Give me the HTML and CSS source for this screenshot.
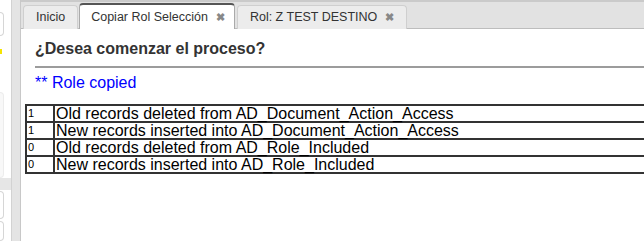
FILE: index.html
```html
<!doctype html>
<html lang="es">

<head>
    <meta charset="UTF-8" />
    <title>Copiar Rol Selección</title>
    <link rel="stylesheet" href="styles.css">
</head>

<body>
    <div class="app">
        <div class="side">
            <div class="side-box box-top"></div>
            <div class="side-mark"></div>
            <div class="side-box box-mid"></div>
            <div class="side-gap"></div>
            <div class="side-box box-low"></div>
            <div class="side-box box-last"></div>
        </div>
        <div class="splitter"></div>
        <div class="main">
            <div class="tabs">
                <div class="tab">Inicio</div>
                <div class="tab active">Copiar Rol Selección<span class="close">&#10006;</span></div>
                <div class="tab">Rol: Z TEST DESTINO<span class="close">&#10006;</span></div>
            </div>
            <div class="content">
                <h2 class="question">¿Desea comenzar el proceso?</h2>
                <p class="message">** Role copied</p>
                <table class="result">
                    <tr><td class="count">1</td><td>Old records deleted from AD_Document_Action_Access</td></tr>
                    <tr><td class="count">1</td><td>New records inserted into AD_Document_Action_Access</td></tr>
                    <tr><td class="count">0</td><td>Old records deleted from AD_Role_Included</td></tr>
                    <tr><td class="count">0</td><td>New records inserted into AD_Role_Included</td></tr>
                </table>
            </div>
        </div>
    </div>
</body>

</html>
```

FILE: styles.css
```css
body {
    margin: 0;
    padding: 0;
    font-family: "Liberation Sans", Arial, sans-serif;
    background-color: #fff;
    overflow: hidden;
}

.app {
    display: flex;
    height: 241px;
}

.side {
    width: 11px;
    display: flex;
    flex-direction: column;
    background-color: #fff;
}

.side-box {
    width: 3px;
    border: 1px solid #d6d6d6;
    border-left: none;
    border-radius: 0 4px 4px 0;
    background-color: #fff;
}

.box-top {
    margin-top: 12px;
    height: 22px;
}

.side-mark {
    width: 2px;
    height: 5px;
    margin-top: 13px;
    background-color: #f5e400;
}

.box-mid {
    margin-top: 38px;
    height: 84px;
    border-color: #ececec;
    background-color: #f8f8f8;
}

.side-gap {
    height: 12px;
    margin-left: -1px;
    background-color: #e6e6e6;
}

.box-low {
    height: 26px;
    margin-top: 1px;
}

.box-last {
    flex: 1;
    margin-top: 2px;
}

.splitter {
    width: 8px;
    background-color: #e4e4e4;
    border-left: 1px solid #d2d2d2;
    border-right: 1px solid #c8c8c8;
}

.main {
    flex: 1;
    min-width: 0;
}

.tabs {
    display: flex;
    align-items: flex-end;
    height: 26px;
    padding-left: 2px;
    background-color: #e2e2e2;
    border-top: 2px solid #cacaca;
    border-bottom: 1px solid #bdbdbd;
}

.tab {
    height: 23px;
    line-height: 23px;
    padding: 0 12px;
    margin-right: 1px;
    margin-bottom: -1px;
    font-size: 12.5px;
    color: #333;
    background-color: #ececec;
    border: 1px solid #cfcfcf;
    border-bottom: none;
    border-radius: 4px 4px 0 0;
    white-space: nowrap;
}

.tab.active {
    height: 24px;
    line-height: 24px;
    background-color: #fff;
    border-color: #aaa;
    border-top: 2px solid #555;
    padding-left: 11px;
    padding-right: 9px;
    margin-right: 2px;
}

.close {
    margin-left: 8px;
    font-size: 11px;
    font-weight: bold;
    color: #888;
}

.content {
    padding: 11px 0 0 14px;
}

.question {
    margin: 0;
    padding-bottom: 8px;
    font-size: 16px;
    font-weight: bold;
    color: #333;
    border-bottom: 2px solid #9c9c9c;
}

.message {
    margin: 6px 0 0 0;
    font-size: 16px;
    color: #0000ff;
}

.result {
    margin-top: 12px;
    margin-left: -10px;
    width: 640px;
    border-collapse: collapse;
}

.result td {
    padding: 0 1px;
    height: 15px;
    line-height: 15px;
    font-size: 16px;
    color: #000;
    border: 2px solid #333;
}

.result td.count {
    width: 24px;
    font-size: 11px;
}
```
